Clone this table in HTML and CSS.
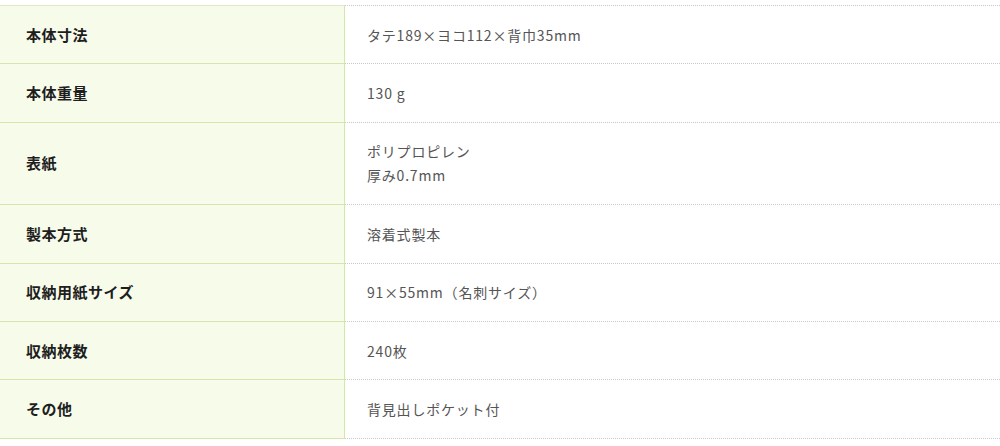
FILE: index.html
```html
<!DOCTYPE html>
<html lang="ja">
<head>
<meta charset="utf-8">
<link rel="stylesheet" href="styles.css">
</head>
<body>
<div class="spec">
  <div class="th first">本体寸法</div><div class="td first">タテ189×ヨコ112×背巾35mm</div>
  <div class="th">本体重量</div><div class="td">130 g</div>
  <div class="th">表紙</div><div class="td">ポリプロピレン<br>厚み0.7mm</div>
  <div class="th">製本方式</div><div class="td">溶着式製本</div>
  <div class="th">収納用紙サイズ</div><div class="td">91×55mm（名刺サイズ）</div>
  <div class="th">収納枚数</div><div class="td">240枚</div>
  <div class="th">その他</div><div class="td">背見出しポケット付</div>
</div>
</body>
</html>
```
FILE: styles.css
```css
html, body {
  margin: 0;
  padding: 0;
  background: #ffffff;
}
body {
  padding-top: 5px;
  font-family: "Noto Sans CJK JP", "Noto Sans", sans-serif;
}
.spec {
  display: grid;
  grid-template-columns: 345px 1fr;
  width: 1000px;
}
.th, .td {
  display: flex;
  align-items: center;
  box-sizing: border-box;
  padding: 16.7px 0;
  line-height: 24px;
}
.th {
  background: #f7fbea;
  border-right: 1px solid #d6e6ab;
  border-bottom: 1px solid #d6e6ab;
  padding-left: 26px;
  font-size: 15px;
  font-weight: bold;
  color: #1e1e1e;
  letter-spacing: 0.5px;
}
.th.first {
  border-top: 1px solid #dfe9c4;
}
.td {
  border-bottom: 1px dotted #c8c8c8;
  padding-left: 22px;
  font-size: 14px;
  color: #555555;
  letter-spacing: 0.8px;
}
.td.first {
  border-top: 1px dotted #c8c8c8;
}
```
